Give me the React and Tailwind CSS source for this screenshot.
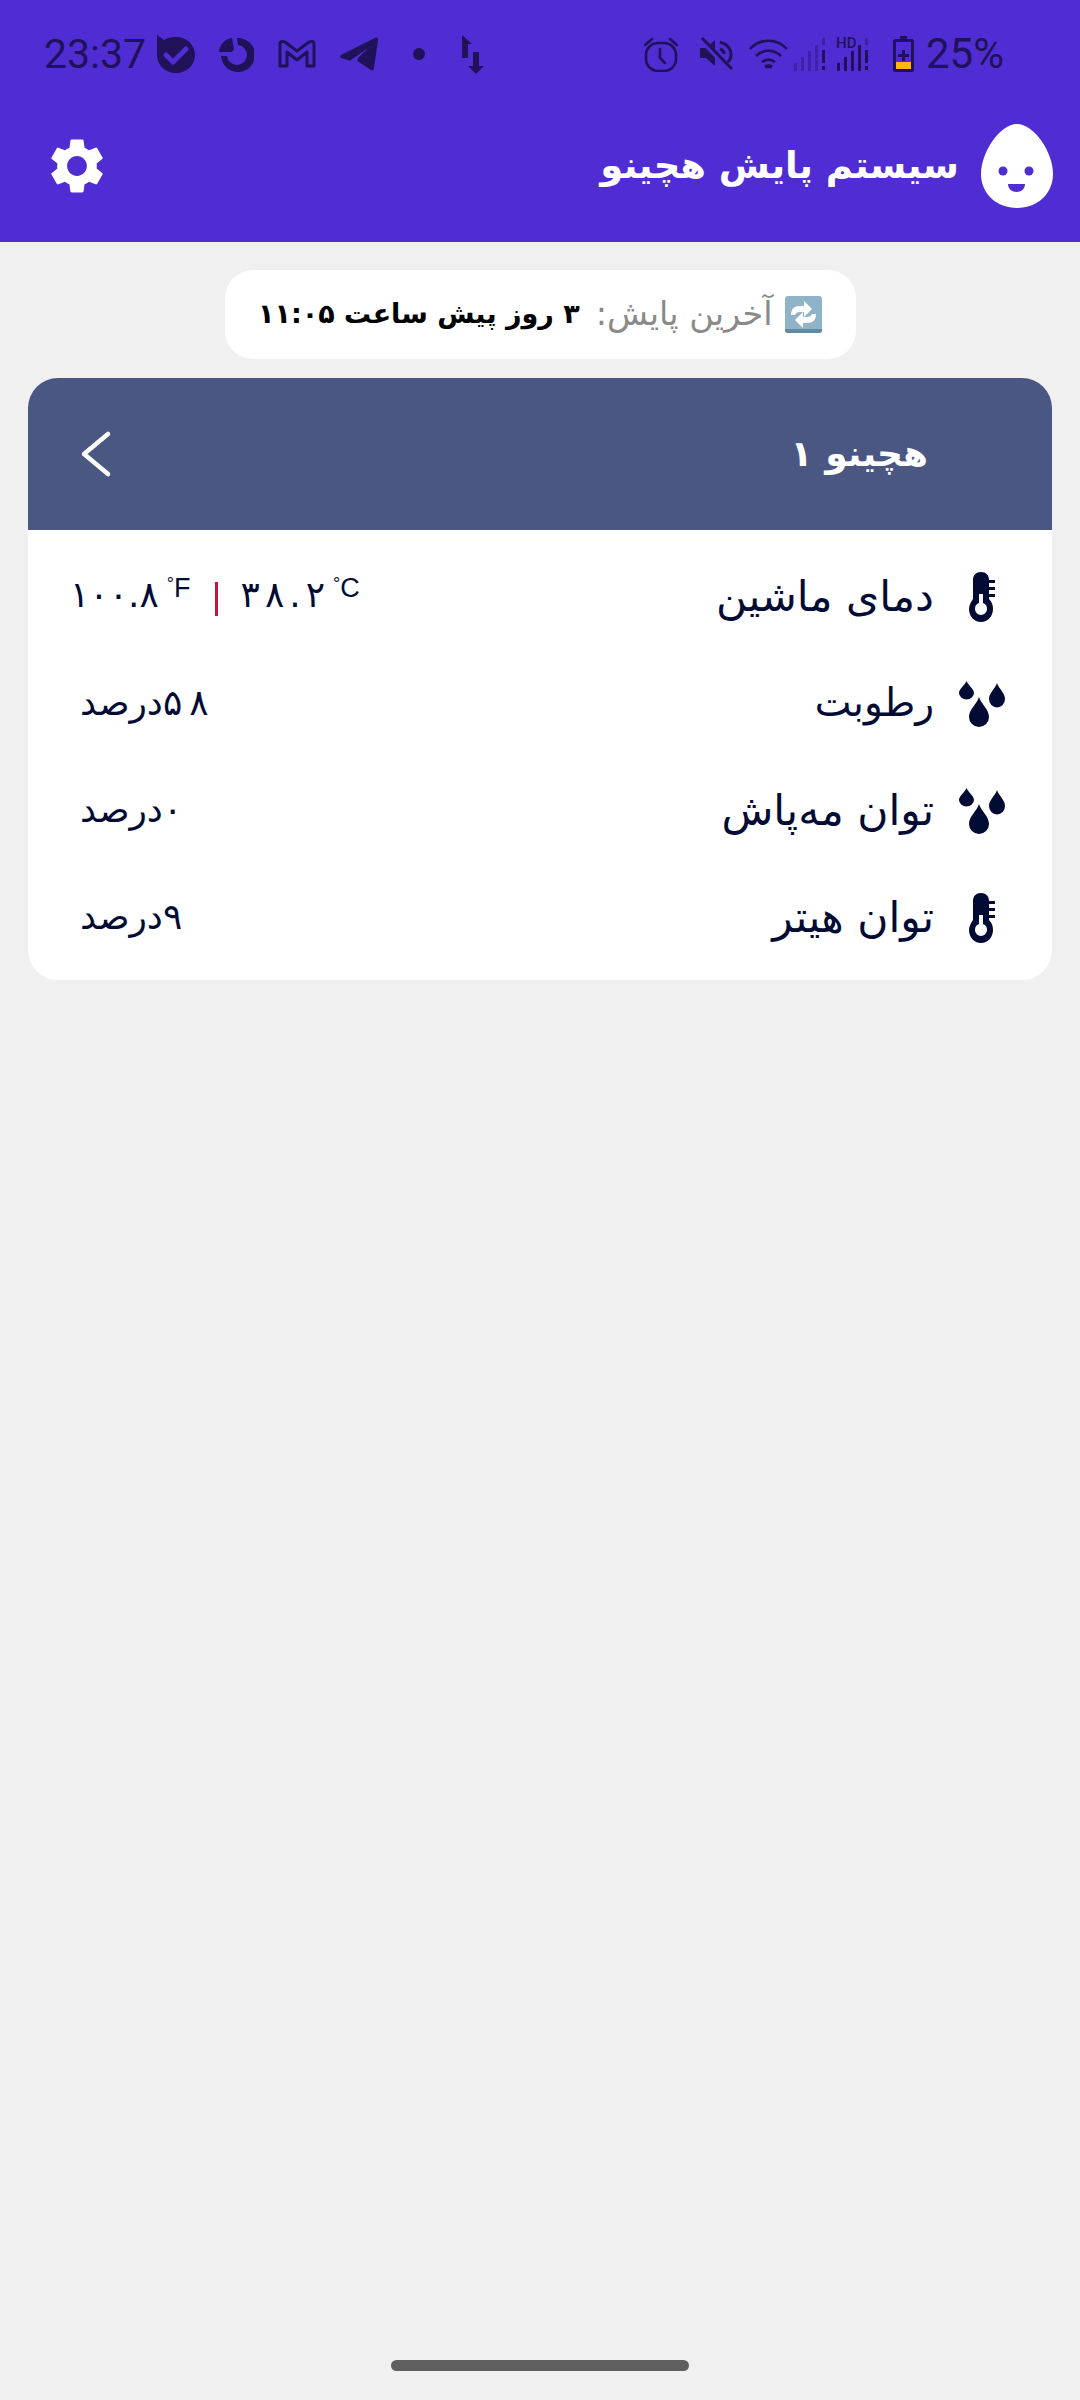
import React from 'react';

const fa = { fontFamily: '"DejaVu Sans", sans-serif' };

const Shield = () => (
  <svg width="38" height="38" viewBox="0 0 38 38" className="shrink-0">
    <path d="M0 0l7 5c3-2 7-3 12-3 11 0 19 8 19 18 0 10-8 18-19 18C8 38 0 30 0 20z" fill="currentColor" />
    <path d="M9 20l7 7 13-13" fill="none" stroke="#4f2dd3" strokeWidth="5" strokeLinecap="round" strokeLinejoin="round" />
  </svg>
);

const Donut = () => (
  <svg width="35" height="35" viewBox="0 0 35 35" className="shrink-0">
    <path d="M2 19h6a10 10 0 1 0 11-11l-1-7a17 17 0 1 1-16 18z" fill="currentColor" />
    <path d="M0 15C1 7 6 2 13 1l2 12c-1 0-2 1-2 2z" fill="currentColor" />
  </svg>
);

const Gmail = () => (
  <svg width="38" height="30" viewBox="0 0 38 30" className="shrink-0">
    <path d="M2 27V5c0-3 3-3 5-2l12 9 12-9c2-1 5-1 5 2v22h-7V13l-10 8-10-8v14z" fill="none" stroke="currentColor" strokeWidth="3" strokeLinejoin="round" />
  </svg>
);

const Telegram = () => (
  <svg width="38" height="34" viewBox="0 0 38 34" className="shrink-0">
    <path d="M1 18L35 1c2-1 3 0 3 2l-4 28c0 2-2 3-3 2l-12-8c-2-1-2-2-1-4l10-10-17 12c-1 1-2 1-3 0L1 21c-1-1-1-2 0-3z" fill="currentColor" />
  </svg>
);

const Arrows = () => (
  <svg width="22" height="39" viewBox="0 0 22 39" className="shrink-0">
    <path d="M0 23V9l0-9 10 9H6v14zM11 17h6v14h5l-8 8-8-8h5z" fill="currentColor" />
  </svg>
);

const Alarm = () => (
  <svg width="34" height="35" viewBox="0 0 34 35" fill="none" stroke="currentColor" strokeWidth="2.6" className="shrink-0">
    <rect x="2" y="6" width="30" height="28" rx="12" />
    <path d="M16 12v9l5 5M1 8l7-6M33 8l-7-6" strokeLinecap="round" />
  </svg>
);

const Mute = () => (
  <svg width="33" height="34" viewBox="0 0 33 34" className="shrink-0">
    <path d="M0 11h6l9-8v26l-9-8H0z" fill="currentColor" />
    <path d="M20 5c7 2 11 7 11 12 0 3-1 6-3 8M20 12c3 1 4 3 4 5" fill="none" stroke="currentColor" strokeWidth="3" />
    <path d="M1 2l30 31" stroke="#4f2dd3" strokeWidth="6" />
    <path d="M2 1l30 31" stroke="currentColor" strokeWidth="3" />
  </svg>
);

const Wifi = () => (
  <svg width="39" height="30" viewBox="0 0 39 30" fill="none" stroke="currentColor" strokeWidth="2.6" className="shrink-0">
    <path d="M1 10c10-11 27-11 37 0M7 17c7-7 18-7 25 0M13 23c4-3 9-3 13 0" />
    <path d="M16 28c2-1 5-1 7 0" strokeWidth="3.5" />
  </svg>
);

const Signal = ({ dim, hd }) => (
  <div className="relative w-[34px] h-[34px] shrink-0">
    {hd && <span className="absolute left-0 top-[-3px] text-[15px] leading-[18px] font-medium" style={{ fontFamily: 'Roboto, sans-serif' }}>HD</span>}
    <svg width="34" height="34" viewBox="0 0 34 34" className="absolute left-0 top-0">
      <g fill="currentColor" opacity={dim ? 0.35 : 1}>
        <rect x="1" y="26" width="3" height="8" />
        <rect x="8" y="20" width="3" height="14" />
        <rect x="15" y="14" width="3" height="20" />
        <rect x="22" y="8" width="3" height="26" />
      </g>
      <rect x="29" y="1" width="3" height="7" fill="currentColor" opacity="0.4" />
      <rect x="29" y="13" width="3" height="13" fill="currentColor" />
      <rect x="29" y="29" width="3" height="4" fill="currentColor" />
    </svg>
  </div>
);

const Battery = () => (
  <svg width="21" height="36" viewBox="0 0 21 36" className="shrink-0">
    <path d="M7 0h7v3h5c1 0 2 1 2 2v29c0 1-1 2-2 2H2c-1 0-2-1-2-2V5c0-1 1-2 2-2h5z" fill="currentColor" />
    <rect x="3" y="6" width="15" height="27" fill="#4f2dd3" />
    <rect x="3" y="26" width="15" height="7" fill="#fdb90a" />
    <path d="M9 14h3v4h4v3h-4v4H9v-4H5v-3h4z" fill="currentColor" />
  </svg>
);

const Gear = () => (
  <svg width="66" height="66" viewBox="0 0 24 24" fill="#fff">
    <path d="M19.14 12.94c.04-.3.06-.61.06-.94 0-.32-.02-.64-.07-.94l2.03-1.58c.18-.14.23-.41.12-.61l-1.92-3.32c-.12-.22-.37-.29-.59-.22l-2.39.96c-.5-.38-1.03-.7-1.62-.94l-.36-2.54c-.04-.24-.24-.41-.48-.41h-3.84c-.24 0-.43.17-.47.41l-.36 2.54c-.59.24-1.13.57-1.62.94l-2.39-.96c-.22-.08-.47 0-.59.22L2.74 8.87c-.12.21-.08.47.12.61l2.03 1.58c-.05.3-.09.63-.09.94s.02.64.07.94l-2.03 1.58c-.18.14-.23.41-.12.61l1.92 3.32c.12.22.37.29.59.22l2.39-.96c.5.38 1.03.7 1.62.94l.36 2.54c.05.24.24.41.48.41h3.84c.24 0 .44-.17.47-.41l.36-2.54c.59-.24 1.13-.56 1.62-.94l2.39.96c.22.08.47 0 .59-.22l1.92-3.32c.12-.22.07-.47-.12-.61l-2.01-1.58zM12 15.6c-1.98 0-3.6-1.62-3.6-3.6s1.62-3.6 3.6-3.6 3.6 1.62 3.6 3.6-1.62 3.6-3.6 3.6z" />
  </svg>
);

const Egg = () => (
  <svg width="72" height="84" viewBox="0 0 72 84" className="shrink-0">
    <path d="M36 0c17 0 36 28 36 50 0 20-16 34-36 34S0 70 0 50C0 28 19 0 36 0z" fill="#fff" />
    <circle cx="22" cy="47" r="4.500" fill="#4f2dd3" />
    <circle cx="48" cy="47" r="4.500" fill="#4f2dd3" />
    <path d="M27 60h17c0 5-4 8-8.500 8S27 65 27 60z" fill="#4f2dd3" />
  </svg>
);

const Repeat = () => (
  <svg width="37" height="37" viewBox="0 0 37 37" className="shrink-0">
    <rect width="37" height="37" rx="3" fill="#8fb4c9" />
    <path d="M0 33h37v1a3 3 0 0 1-3 3H3a3 3 0 0 1-3-3z" fill="#5f8ba3" />
    <path d="M6 19c0-6 3-9 9-9h4V5l8 8-8 8v-5h-4c-3 0-4 1-5 3zM31 18c0 6-3 9-9 9h-4v5l-8-8 8-8v5h4c3 0 4-1 5-3z" fill="#fff" />
  </svg>
);

const Thermo = () => (
  <svg width="26" height="50" viewBox="0 0 26 50" className="shrink-0" fill="#020b33">
    <path fillRule="evenodd" d="M12 0c5 0 8 3 8 8v19c3 3 4 6 4 10 0 7-5 13-12 13S0 44 0 37c0-4 2-7 4-10V8c0-5 3-8 8-8zM10 22v9c-3 1-4 3-4 6 0 3 3 6 6 6s6-3 6-6c0-3-1-5-4-6v-9z" />
    <rect x="20" y="8" width="6" height="3" />
    <rect x="20" y="15" width="6" height="3" />
    <rect x="20" y="22" width="6" height="3" />
  </svg>
);

const Drops = () => (
  <svg width="46" height="46" viewBox="0 0 46 46" className="shrink-0" fill="#020b33">
    <path d="M7.500 0C9 4 15 8 15 12a7.500 6.500 0 0 1-15 0C0 8 6 4 7.500 0z" />
    <path d="M38 2c2 6 8 10 8 16a8 8.500 0 0 1-16 0c0-6 6-10 8-16z" />
    <path d="M20 16c2 7 10 12 10 20a10 10 0 0 1-20 0c0-8 8-13 10-20z" />
  </svg>
);

// letter-spacing is ignored on arabic runs, so the digits are spaced with a flex gap
const Digits = ({ text, gap }) => (
  <span dir="ltr" className={`inline-flex ${gap}`}>
    {[...text].map((ch, i) => <span key={i}>{ch}</span>)}
  </span>
);

const Unit = ({ letter }) => (
  <span className="ml-[8px] -mt-[12px] flex items-start leading-none" style={{ fontFamily: '"Liberation Sans", sans-serif' }}>
    <span className="text-[18px] leading-none">°</span>
    <span className="text-[27px] leading-none">{letter}</span>
  </span>
);

const Row = ({ icon, label, value, pl = 'pl-[52px]', size = 'text-[42.500px]' }) => (
  <div dir="rtl" className={`flex items-center h-[107px] pr-[47px] ${pl}`} style={fa}>
    <div className="w-[46px] flex justify-center shrink-0">{icon}</div>
    <span className={`mr-[25px] ${size} text-[#020b33]`}>{label}</span>
    <div className="mr-auto">{value}</div>
  </div>
);

const Pct = ({ num, gap = 'gap-0' }) => (
  <span className="flex items-center -mt-[2px] text-[36px] text-[#020b33]">
    <Digits text={num} gap={gap} />
    <span>درصد</span>
  </span>
);

const Temp = () => (
  <div dir="ltr" className="-mt-[4px] flex items-center text-[36px] text-[#020b33]">
    <Digits text="۱۰۰.۸" gap="gap-0" />
    <Unit letter="F" />
    <span className="ml-[24px] mr-[23px] w-[3px] h-[34px] bg-[#d0103a] mt-2"></span>
    <Digits text="۳۸.۲" gap="gap-[5px]" />
    <Unit letter="C" />
  </div>
);

export default function App() {
  return (
    <div className="w-[1080px] h-[2400px] flex flex-col bg-[#f0f0f0]">
      <div className="bg-[#4f2dd3] h-[242px] shrink-0">
        {/* status bar */}
        <div className="flex items-center h-[108px] pl-[44px] pr-[76px] text-[#1f1259]">
          <span className="text-[41px] leading-none mr-[11px]" style={{ fontFamily: 'Roboto, sans-serif' }}>23:37</span>
          <div className="flex items-center gap-[24px]">
            <Shield />
            <Donut />
            <Gmail />
            <Telegram />
          </div>
          <span className="ml-[35px] w-[12px] h-[12px] rounded-full bg-[#1f1259]"></span>
          <div className="ml-[37px]"><Arrows /></div>
          <div className="ml-auto flex items-center">
            <Alarm />
            <div className="ml-[22px]"><Mute /></div>
            <div className="ml-[16px]"><Wifi /></div>
            <div className="ml-[5px]"><Signal dim /></div>
            <div className="ml-[9px]"><Signal hd /></div>
            <div className="ml-[23px] flex items-center gap-[12px]">
              <Battery />
              <span className="text-[42px] leading-none" style={{ fontFamily: 'Roboto, sans-serif' }}>25%</span>
            </div>
          </div>
        </div>
        {/* app bar */}
        <div className="flex items-center justify-between pl-[44px] pr-[27px] mt-[16px]">
          <Gear />
          <div dir="rtl" className="flex items-center">
            <Egg />
            <span className="mr-[22px] text-[37px] font-bold text-white" style={fa}>سیستم پایش هچینو</span>
          </div>
        </div>
      </div>

      <div dir="rtl" className="self-center mt-[28px] w-[631px] h-[89px] bg-white rounded-[28px] flex items-center pr-[34px] whitespace-nowrap" style={fa}>
        <Repeat />
        <span className="mr-[12px] text-[33.500px] text-[#8a8a8a]">آخرین پایش:</span>
        <span className="mr-[16px] text-[27px] font-bold text-black">۳ روز پیش ساعت ۱۱:۰۵</span>
      </div>

      <div className="mx-[28px] mt-[19px] rounded-[30px] bg-white overflow-hidden">
        <div className="h-[152px] bg-[#4a5783] flex items-center justify-between pl-[52px] pr-[124px]">
          <svg width="34" height="48" viewBox="0 0 34 48" fill="none" stroke="#fff" strokeWidth="4.500" strokeLinecap="round" strokeLinejoin="round">
            <path d="M28 4L4 24l24 20" />
          </svg>
          <span dir="rtl" className="text-[36px] font-bold text-white" style={fa}>هچینو ۱</span>
        </div>
        <div className="pt-[13px] pb-[9px]">
          <Row icon={<Thermo />} label="دمای ماشین" value={<Temp />} pl="pl-[42px]" />
          <Row icon={<Drops />} label="رطوبت" value={<Pct num="۵۸" gap="gap-[7px]" />} size="text-[39px]" />
          <Row icon={<Drops />} label="توان مه‌پاش" value={<Pct num="۰" />} />
          <Row icon={<Thermo />} label="توان هیتر" value={<Pct num="۹" />} />
        </div>
      </div>

      <div className="mt-auto mb-[29px] self-center w-[298px] h-[11px] rounded-full bg-[#5f5f5f]"></div>
    </div>
  );
}
